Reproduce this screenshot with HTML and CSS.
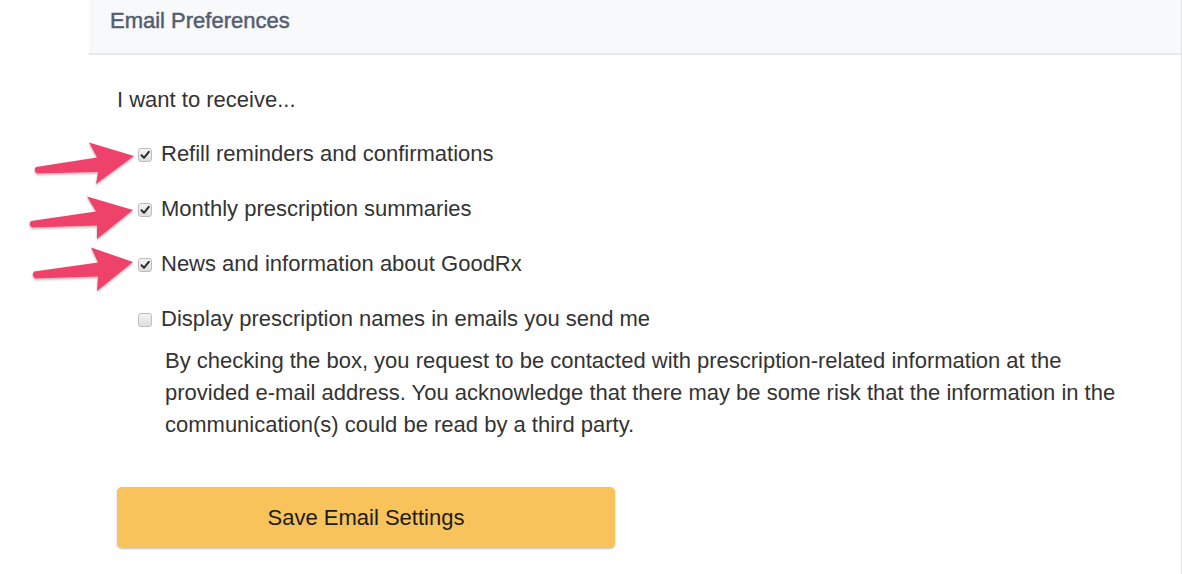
FILE: index.html
```html
<!DOCTYPE html>
<html>
<head>
<meta charset="utf-8">
<link rel="stylesheet" href="styles.css">
</head>
<body>
<div class="page">
  <section class="card">
    <header class="card-head">Email Preferences</header>
    <div class="card-body">
      <p class="intro">I want to receive...</p>
      <ul class="options">
        <li class="option">
          <span class="box checked"><svg viewBox="0 0 14 14" width="14" height="14"><path d="M3.5 7.2 L6 9.8 L10.8 3.8" fill="none" stroke="#2b2b2b" stroke-width="2" stroke-linecap="round" stroke-linejoin="round"/></svg></span>
          <span class="label">Refill reminders and confirmations</span>
        </li>
        <li class="option">
          <span class="box checked"><svg viewBox="0 0 14 14" width="14" height="14"><path d="M3.5 7.2 L6 9.8 L10.8 3.8" fill="none" stroke="#2b2b2b" stroke-width="2" stroke-linecap="round" stroke-linejoin="round"/></svg></span>
          <span class="label">Monthly prescription summaries</span>
        </li>
        <li class="option">
          <span class="box checked"><svg viewBox="0 0 14 14" width="14" height="14"><path d="M3.5 7.2 L6 9.8 L10.8 3.8" fill="none" stroke="#2b2b2b" stroke-width="2" stroke-linecap="round" stroke-linejoin="round"/></svg></span>
          <span class="label">News and information about GoodRx</span>
        </li>
        <li class="option">
          <span class="box"></span>
          <span class="label">Display prescription names in emails you send me</span>
        </li>
      </ul>
      <p class="note">By checking the box, you request to be contacted with prescription-related information at the provided e-mail address. You acknowledge that there may be some risk that the information in the communication(s) could be read by a third party.</p>
      <button class="save">Save Email Settings</button>
    </div>
  </section>
  <svg class="arrows" width="160" height="320" viewBox="0 0 160 320">
    <defs>
      <filter id="sh" x="-20%" y="-20%" width="140%" height="150%">
        <feDropShadow dx="0" dy="1.5" stdDeviation="1.2" flood-color="#000" flood-opacity="0.3"/>
      </filter>
    </defs>
    <g fill="#ee436b" filter="url(#sh)">
      <path d="M36 167 Q33 170.5 37 173.5 L98 172 L96 184 L134 156 L89 142.5 L97 157.5 Z"/>
      <path d="M31 221 Q28 224.5 32 227.5 L97 225.5 L97 239 L133 210 L87 196.5 L96 211.5 Z"/>
      <path d="M34 271.5 Q31 275 35 278.5 L98 276.5 L97 291 L133 262 L91 247.5 L98 262.5 Z"/>
    </g>
  </svg>
</div>
</body>
</html>
```

FILE: styles.css
```css
* { box-sizing: border-box; }

html, body {
  margin: 0;
  padding: 0;
  background: #ffffff;
}

body {
  font-family: "Liberation Sans", Arial, Helvetica, sans-serif;
  color: #333333;
  width: 1182px;
  height: 574px;
  overflow: hidden;
}

.page {
  position: relative;
  padding-left: 89px;
}

.card {
  border-right: 1px solid #e2e2e2;
  height: 574px;
}

.card-head {
  height: 55px;
  background: #f8f9fb;
  border-bottom: 2px solid #e8e9eb;
  padding-left: 21px;
  font-size: 22px;
  line-height: 42px;
  color: #555d70;
  -webkit-text-stroke: 0.5px #555d70;
}

.card-body {
  padding: 29px 0 0 28px;
  display: flex;
  flex-direction: column;
  align-items: flex-start;
}

.intro {
  margin: 0;
  font-size: 22px;
  line-height: 32px;
}

.options {
  list-style: none;
  margin: 22px 0 0 0;
  padding: 0 0 0 21px;
  display: flex;
  flex-direction: column;
  gap: 23px;
}

.option {
  display: flex;
  align-items: center;
  gap: 9px;
  height: 32px;
  font-size: 22px;
  line-height: 32px;
}

.box {
  width: 14px;
  height: 14px;
  border: 1px solid #bdbdbd;
  border-radius: 3px;
  background: linear-gradient(#f4f4f4, #dedede);
  display: flex;
  align-items: center;
  justify-content: center;
  margin-top: 2px;
  flex: none;
}

.box svg {
  display: block;
  margin: -1px;
}

.note {
  margin: 10px 0 0 48px;
  width: 965px;
  font-size: 22px;
  line-height: 32px;
}

.save {
  margin-top: 46px;
  width: 498px;
  height: 61px;
  border: none;
  border-radius: 5px;
  background: #f7c35a;
  box-shadow: 0 1px 2px rgba(60, 70, 100, 0.35);
  font-family: "Liberation Sans", Arial, Helvetica, sans-serif;
  font-size: 22px;
  color: #1c1c1c;
  padding: 0;
  cursor: pointer;
}

.arrows {
  position: absolute;
  left: 0;
  top: 0;
}
```
